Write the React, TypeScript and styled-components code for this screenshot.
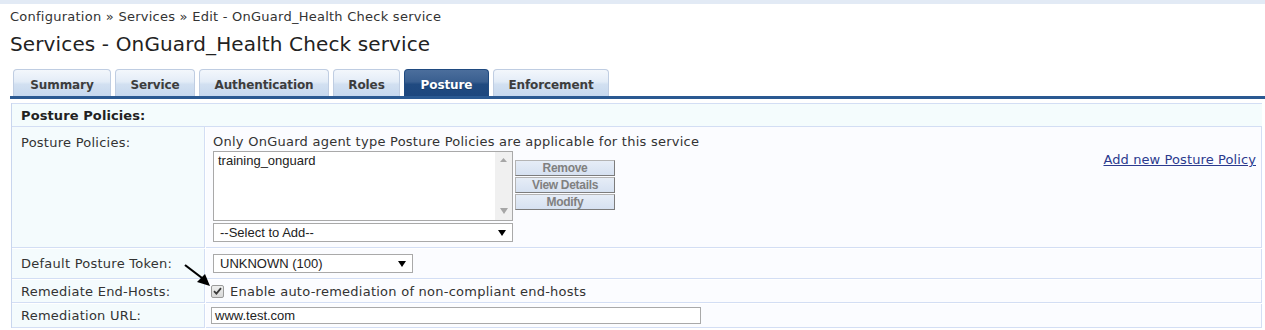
import React from "react";
import styled, { createGlobalStyle } from "styled-components";

const GlobalStyle = createGlobalStyle`
  body {
    margin: 0;
    background: #ffffff;
    font-family: "DejaVu Sans", Verdana, sans-serif;
    color: #333333;
  }
`;

const Page = styled.div`
  position: relative;
  width: 1265px;
  height: 330px;
  overflow: hidden;
`;

const TopStrip = styled.div`
  height: 4px;
  background: #e2eaf5;
`;

const Breadcrumb = styled.div`
  margin: 4px 0 0 10px;
  font-size: 13px;
  line-height: 17px;
  letter-spacing: 0.25px;
  color: #333333;
`;

const Title = styled.h1`
  margin: 6px 0 0 10px;
  font-size: 20px;
  font-weight: normal;
  line-height: 26px;
  letter-spacing: 0.13px;
  color: #222222;
`;

const TabBar = styled.div`
  display: flex;
  gap: 4px;
  margin: 12px 0 0 13px;
  height: 27px;
  align-items: flex-end;
`;

const Tab = styled.div<{ $w: number; $active?: boolean }>`
  box-sizing: border-box;
  width: ${({ $w }) => $w}px;
  height: 27px;
  padding-top: 3px;
  display: flex;
  align-items: center;
  justify-content: center;
  font-size: 12px;
  font-weight: bold;
  letter-spacing: -0.1px;
  border: 1px solid ${({ $active }) => ($active ? "#1f4a80" : "#bfcde2")};
  border-bottom: none;
  border-radius: 4px 4px 0 0;
  color: ${({ $active }) => ($active ? "#ffffff" : "#3d3d3d")};
  background: ${({ $active }) =>
    $active
      ? "linear-gradient(#4b6e9c 0%, #3a5f90 45%, #204a80 55%, #1d477e 100%)"
      : "linear-gradient(#f3f7fc 0%, #e3ecf7 45%, #d2e0f1 55%, #c6d8ee 100%)"};
  text-shadow: ${({ $active }) => ($active ? "0 1px 0 #173a66" : "none")};
`;

const BlueBar = styled.div`
  margin-left: 10px;
  height: 3px;
  background: #2a5992;
`;

const Panel = styled.div`
  position: relative;
  margin: 4px 0 0 11px;
  width: 1250px;
  border-left: 1px solid #c9d6ee;
  font-size: 13px;
  letter-spacing: 0.25px;
`;

const SectionHeader = styled.div`
  box-sizing: border-box;
  height: 24px;
  padding-left: 9px;
  display: flex;
  align-items: center;
  font-weight: bold;
  letter-spacing: 0.1px;
  color: #222222;
  background: #f4fcfd;
  border-top: 1px solid #d3def4;
  border-bottom: 1px solid #d3def4;
`;

const Row = styled.div<{ $h: number }>`
  display: grid;
  grid-template-columns: 193px 1fr;
  column-gap: 1px;
  height: ${({ $h }) => $h}px;

  & + & {
    margin-top: 1px;
  }
`;

const LabelCell = styled.div<{ $top?: boolean }>`
  box-sizing: border-box;
  padding: ${({ $top }) => ($top ? "8px 0 0 9px" : "0 0 0 9px")};
  display: flex;
  align-items: ${({ $top }) => ($top ? "flex-start" : "center")};
  color: #333333;
  background: #f4fbfd;
  border-right: 1px solid #d3def4;
  border-bottom: 1px solid #d3def4;
`;

const ValueCell = styled.div<{ $pl?: number }>`
  box-sizing: border-box;
  position: relative;
  display: flex;
  align-items: center;
  padding-left: ${({ $pl }) => $pl ?? 7}px;
  background: #fbfcff;
  border-right: 1px solid #d3def4;
  border-bottom: 1px solid #d3def4;
`;

const PolicyCell = styled(ValueCell)`
  flex-direction: column;
  align-items: stretch;
  padding-top: 7px;
`;

const Note = styled.div`
  line-height: 16px;
  color: #333333;
`;

const PolicyBody = styled.div`
  display: flex;
  margin-top: 1px;
`;

const PolicyControls = styled.div`
  display: flex;
  flex-direction: column;
  gap: 2px;
`;

const ListBox = styled.div`
  box-sizing: border-box;
  width: 300px;
  height: 70px;
  display: flex;
  border: 1px solid #a9a9a9;
  background: #ffffff;
`;

const ListItems = styled.div`
  flex: 1;
  padding: 1px 0 0 4px;
  font-family: "Liberation Sans", Arial, sans-serif;
  letter-spacing: 0;
  line-height: 15px;
  color: #222222;
`;

const ScrollTrack = styled.div`
  width: 17px;
  background: #f0f0f0;
  display: flex;
  flex-direction: column;
  justify-content: space-between;
  align-items: center;
  padding: 6px 0 6px;
`;

const Select = styled.div<{ $w: number }>`
  box-sizing: border-box;
  width: ${({ $w }) => $w}px;
  height: 19px;
  display: flex;
  align-items: center;
  justify-content: space-between;
  padding: 0 6px 0 6px;
  border: 1px solid #a9a9a9;
  background: #ffffff;
  font-family: "Liberation Sans", Arial, sans-serif;
  letter-spacing: 0;
  color: #222222;
`;

const ActionColumn = styled.div`
  display: flex;
  flex-direction: column;
  gap: 1px;
  margin: 9px 0 0 2px;
`;

const ActionButton = styled.div`
  box-sizing: border-box;
  width: 100px;
  height: 16px;
  display: flex;
  align-items: center;
  justify-content: center;
  font-family: "Liberation Sans", Arial, sans-serif;
  font-size: 12px;
  font-weight: bold;
  letter-spacing: -0.3px;
  color: #808080;
  background: linear-gradient(#e6edf7, #d6e1f1);
  border: 1px solid #8c8c8c;
  border-color: #b4b4b4 #7c7c7c #7c7c7c #b4b4b4;
`;

const AddLink = styled.a`
  position: absolute;
  right: 5px;
  top: 25px;
  color: #2b3a8e;
  letter-spacing: 0.1px;
  text-decoration: underline;
  cursor: pointer;
`;

const CheckRow = styled.label`
  display: flex;
  align-items: center;
  gap: 6px;
  color: #333333;
`;

const CheckBox = styled.span`
  box-sizing: border-box;
  width: 13px;
  height: 13px;
  display: flex;
  align-items: center;
  justify-content: center;
  border: 1px solid #9a9a9a;
  border-radius: 2px;
  background: linear-gradient(#eeeeee, #d8d8d8);
`;

const TextInput = styled.div`
  box-sizing: border-box;
  width: 490px;
  height: 17px;
  display: flex;
  align-items: center;
  padding-left: 3px;
  border: 1px solid #a9a9a9;
  background: #ffffff;
  font-family: "Liberation Sans", Arial, sans-serif;
  letter-spacing: 0;
  color: #222222;
`;

const Pointer = styled.svg`
  position: absolute;
  left: 183px;
  top: 262px;
`;

const DownArrow = ({ color = "#000" }: { color?: string }) => (
  <svg width="8" height="6" viewBox="0 0 8 6">
    <path d="M0 0 H8 L4 6 Z" fill={color} />
  </svg>
);

const UpArrow = ({ color = "#a6a6a6" }: { color?: string }) => (
  <svg width="7" height="4" viewBox="0 0 7 4">
    <path d="M0 4 H7 L3.5 0 Z" fill={color} />
  </svg>
);

const tabs = [
  { label: "Summary", w: 98 },
  { label: "Service", w: 80 },
  { label: "Authentication", w: 130 },
  { label: "Roles", w: 67 },
  { label: "Posture", w: 85, active: true },
  { label: "Enforcement", w: 116 },
];

export default function App() {
  return (
    <Page>
      <GlobalStyle />
      <TopStrip />
      <Breadcrumb>Configuration » Services » Edit - OnGuard_Health Check service</Breadcrumb>
      <Title>Services - OnGuard_Health Check service</Title>
      <TabBar>
        {tabs.map((t) => (
          <Tab key={t.label} $w={t.w} $active={t.active}>
            {t.label}
          </Tab>
        ))}
      </TabBar>
      <BlueBar />
      <Panel>
        <SectionHeader>Posture Policies:</SectionHeader>
        <Row $h={121}>
          <LabelCell $top>Posture Policies:</LabelCell>
          <PolicyCell>
            <Note>Only OnGuard agent type Posture Policies are applicable for this service</Note>
            <PolicyBody>
              <PolicyControls>
                <ListBox>
                  <ListItems>training_onguard</ListItems>
                  <ScrollTrack>
                    <UpArrow />
                    <DownArrow color="#a6a6a6" />
                  </ScrollTrack>
                </ListBox>
                <Select $w={300}>
                  --Select to Add--
                  <DownArrow />
                </Select>
              </PolicyControls>
              <ActionColumn>
                <ActionButton>Remove</ActionButton>
                <ActionButton>View Details</ActionButton>
                <ActionButton>Modify</ActionButton>
              </ActionColumn>
            </PolicyBody>
            <AddLink>Add new Posture Policy</AddLink>
          </PolicyCell>
        </Row>
        <Row $h={30}>
          <LabelCell>Default Posture Token:</LabelCell>
          <ValueCell>
            <Select $w={200}>
              UNKNOWN (100)
              <DownArrow />
            </Select>
          </ValueCell>
        </Row>
        <Row $h={23}>
          <LabelCell>Remediate End-Hosts:</LabelCell>
          <ValueCell $pl={5}>
            <CheckRow>
              <CheckBox>
                <svg width="9" height="8" viewBox="0 0 9 8">
                  <path d="M1 4.2 L3.4 6.6 L8 1.2" fill="none" stroke="#3a3a3a" strokeWidth="1.8" />
                </svg>
              </CheckBox>
              Enable auto-remediation of non-compliant end-hosts
            </CheckRow>
          </ValueCell>
        </Row>
        <Row $h={24}>
          <LabelCell>Remediation URL:</LabelCell>
          <ValueCell $pl={5}>
            <TextInput>www.test.com</TextInput>
          </ValueCell>
        </Row>
      </Panel>
      <Pointer width="30" height="26" viewBox="0 0 30 26">
        <path d="M2 3 L19 16" stroke="#000" strokeWidth="2.2" />
        <path d="M27 24 L14 20 L22 12 Z" fill="#000" />
      </Pointer>
    </Page>
  );
}
